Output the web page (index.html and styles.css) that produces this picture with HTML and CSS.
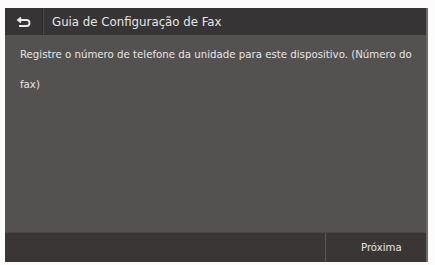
FILE: index.html
```html
<!DOCTYPE html>
<html>
<head>
<meta charset="utf-8">
<link rel="stylesheet" href="styles.css">
</head>
<body>
<div class="screen">
  <div class="header">
    <div class="back">
      <svg width="16" height="12" viewBox="0 0 16 12"><path d="M5 1.5 L2 4 L5 6.5 M2 4 H10.5 A3 3 0 0 1 10.5 10 H3" fill="none" stroke="#e8e8e8" stroke-width="1.8"/></svg>
    </div>
    <div class="title">Guia de Configuração de Fax</div>
  </div>
  <div class="body">
    <p class="msg">Registre o número de telefone da unidade para este dispositivo. (Número do fax)</p>
  </div>
  <div class="footer">
    <div class="spacer"></div>
    <div class="next">Próxima</div>
  </div>
</div>
</body>
</html>
```
FILE: styles.css
```css
html, body { margin: 0; padding: 0; background: #fcfcfc; }
body { width: 435px; height: 265px; padding: 8px 7px 3px 5px; box-sizing: border-box; font-family: "DejaVu Sans Condensed", sans-serif; color: #e6e4e4; }
.screen { height: 254px; display: flex; flex-direction: column; background: #545151; border-right: 2px solid #6a6868; }
.header { height: 27px; display: flex; align-items: center; background: #363434; }
.back { width: 37px; height: 100%; display: flex; align-items: center; justify-content: center; border-right: 1px solid #2a2828; box-shadow: 1px 0 0 #4a4848; }
.title { padding-left: 9px; font-size: 13.1px; }
.body { flex: 1; padding: 4px 10px 0 15px; }
.msg { margin: 0; font-size: 11.35px; line-height: 30px; }
.footer { height: 29px; display: flex; background: #3a3636; border-top: 1px solid #4a4646; }
.spacer { flex: 1; border-right: 1px solid #5a5656; }
.next { width: 100px; display: flex; align-items: center; padding-left: 35px; box-sizing: border-box; font-size: 11.3px; }
```
